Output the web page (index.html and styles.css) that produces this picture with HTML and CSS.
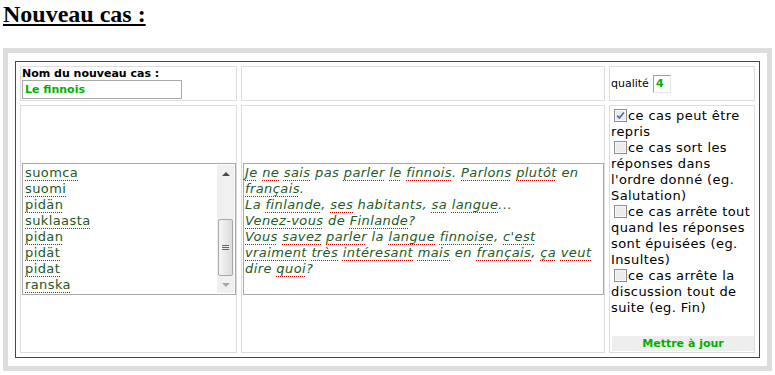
FILE: index.html
```html
<!DOCTYPE html>
<html lang="fr">

<head>
    <meta charset="UTF-8">
    <meta name="viewport" content="width=device-width, initial-scale=1.0">
    <title>Nouveau cas</title>
    <link rel="stylesheet" href="styles.css">
</head>

<body>
    <h1 class="page-title">Nouveau cas :</h1>

    <div class="panel">
        <form class="case-form">
            <div class="cell cell-name">
                <label class="name-label" for="caseName">Nom du nouveau cas :</label>
                <input type="text" id="caseName" class="name-input" value="Le finnois">
            </div>
            <div class="cell"></div>
            <div class="cell cell-quality">
                <label for="quality">qualité</label>
                <input type="text" id="quality" class="quality-input" value="4">
            </div>

            <div class="cell cell-middle">
                <div class="word-list">
                    <div class="word-lines">
                        <span class="sp">suomca</span><br>
                        <span class="sp">suomi</span><br>
                        <span class="sp">pidän</span><br>
                        <span class="sp">suklaasta</span><br>
                        <span class="sp">pidan</span><br>
                        <span class="sp">pidät</span><br>
                        <span class="sp">pidat</span><br>
                        <span class="sp">ranska</span>
                    </div>
                    <div class="scrollbar">
                        <span class="scroll-button"><span class="arrow-up"></span></span>
                        <span class="scroll-track">
                            <span class="scroll-thumb"><span class="grip"></span></span>
                        </span>
                        <span class="scroll-button"><span class="arrow-down"></span></span>
                    </div>
                </div>
            </div>
            <div class="cell cell-middle">
                <div class="answer-box">
                    <span class="sp">Je</span> <span class="sp">ne</span> <span class="sp">sais</span> pas <span class="sp">parler</span> <span class="sp">le</span> <span class="sp">finnois</span>. <span class="sp">Parlons</span> <span class="sp">plutôt</span> en <span class="sp">français</span>.<br>
                    La <span class="sp">finlande</span>, <span class="sp">ses</span> habitants, <span class="sp">sa</span> <span class="sp">langue</span>...<br>
                    <span class="sp">Venez-vous</span> de <span class="sp">Finlande</span>?<br>
                    <span class="sp">Vous</span> <span class="sp">savez</span> <span class="sp">parler</span> la <span class="sp">langue</span> <span class="sp">finnoise</span>, <span class="sp">c'est</span> <span class="sp">vraiment</span> <span class="sp">très</span> <span class="sp">intéresant</span> <span class="sp">mais</span> en <span class="sp">français</span>, <span class="sp">ça</span> <span class="sp">veut</span> dire <span class="sp">quoi</span>?
                </div>
            </div>
            <div class="cell cell-options">
                <label class="option">
                    <svg class="check" width="13" height="13" viewBox="0 0 13 13">
                        <rect x="0.5" y="0.5" width="12" height="12" fill="#ececec" stroke="#8f8f8f" />
                        <rect x="1.5" y="1.5" width="10" height="10" fill="none" stroke="#f8f8f8" />
                        <path d="M3.2 6.6 L5.4 9 L9.8 3.6" fill="none" stroke="#4f66a0" stroke-width="1.6" />
                    </svg>ce cas peut être repris
                </label>
                <label class="option">
                    <svg class="check" width="13" height="13" viewBox="0 0 13 13">
                        <rect x="0.5" y="0.5" width="12" height="12" fill="#ececec" stroke="#8f8f8f" />
                        <rect x="1.5" y="1.5" width="10" height="10" fill="none" stroke="#f8f8f8" />
                    </svg>ce cas sort les réponses dans l'ordre donné (eg. Salutation)
                </label>
                <label class="option">
                    <svg class="check" width="13" height="13" viewBox="0 0 13 13">
                        <rect x="0.5" y="0.5" width="12" height="12" fill="#ececec" stroke="#8f8f8f" />
                        <rect x="1.5" y="1.5" width="10" height="10" fill="none" stroke="#f8f8f8" />
                    </svg>ce cas arrête tout quand les réponses sont épuisées (eg. Insultes)
                </label>
                <label class="option">
                    <svg class="check" width="13" height="13" viewBox="0 0 13 13">
                        <rect x="0.5" y="0.5" width="12" height="12" fill="#ececec" stroke="#8f8f8f" />
                        <rect x="1.5" y="1.5" width="10" height="10" fill="none" stroke="#f8f8f8" />
                    </svg>ce cas arrête la discussion tout de suite (eg. Fin)
                </label>
                <button type="button" class="update-button">Mettre à jour</button>
            </div>
        </form>
    </div>
</body>

</html>
```

FILE: styles.css
```css
body {
    margin: 0;
    padding: 0 3px;
    background-color: white;
    font-family: "DejaVu Sans", Verdana, sans-serif;
    color: black;
}

.page-title {
    margin: 0 0 20px;
    font-family: "Liberation Serif", "Times New Roman", serif;
    font-size: 24px;
    line-height: 28px;
    font-weight: bold;
    text-decoration: underline;
    text-decoration-thickness: 2px;
    text-underline-offset: 2px;
}

.panel {
    border: 5px solid #dddddd;
    padding: 8px 7px;
}

.case-form {
    display: grid;
    grid-template-columns: 217px 364px 146px;
    gap: 4px;
    margin: 0;
    padding: 4px;
    border: 1px solid #ee0000;
}

.cell {
    border: 1px solid #dddddd;
    padding: 1px;
    font-size: 11px;
}

.cell-name {
    padding-right: 0;
}

.name-label {
    display: block;
    font-weight: bold;
    line-height: 12px;
}

.name-input {
    box-sizing: border-box;
    width: 160px;
    height: 19px;
    margin: 0;
    padding: 0 2px;
    border: 1px solid #a9a9a9;
    font-family: inherit;
    font-size: 11px;
    font-weight: bold;
    color: #00b000;
}

.cell-quality {
    display: flex;
    align-items: center;
    gap: 4px;
}

.quality-input {
    box-sizing: border-box;
    width: 18px;
    height: 18px;
    margin: 0;
    padding: 0 2px;
    border: 1px solid;
    border-color: #a0a0a0 #e8e8e8 #e8e8e8 #a0a0a0;
    font-family: inherit;
    font-size: 11px;
    font-weight: bold;
    color: #00b000;
}

.cell-middle {
    display: flex;
    align-items: center;
    padding: 0 0 0 1px;
}

.word-list,
.answer-box {
    box-sizing: border-box;
    height: 132px;
    border: 1px solid #a9a9a9;
    font-size: 13px;
    line-height: 16px;
    letter-spacing: 0.4px;
    color: #235a23;
}

.word-list {
    display: flex;
    width: 214px;
    padding: 1px;
}

.word-lines {
    flex: 1;
    padding-left: 1px;
}

.answer-box {
    width: 361px;
    padding: 1px 4px 1px 1px;
    font-style: italic;
}

.sp {
    text-decoration: underline dotted #e00000;
    text-decoration-thickness: 1px;
    text-underline-offset: 3px;
}

.scrollbar {
    display: flex;
    flex-direction: column;
    width: 17px;
    background-color: #f0f0f0;
}

.scroll-button {
    display: flex;
    align-items: center;
    justify-content: center;
    height: 17px;
}

.arrow-up {
    border-left: 4px solid transparent;
    border-right: 4px solid transparent;
    border-bottom: 4px solid #4a4a4a;
}

.arrow-down {
    border-left: 4px solid transparent;
    border-right: 4px solid transparent;
    border-top: 4px solid #a6a6a6;
}

.scroll-track {
    flex: 1;
    display: flex;
    flex-direction: column;
    justify-content: flex-end;
}

.scroll-thumb {
    display: flex;
    align-items: center;
    justify-content: center;
    box-sizing: border-box;
    height: 57px;
    margin: 0 1px;
    border: 1px solid #a8a8a8;
    border-radius: 2px;
    background: linear-gradient(to right, #f6f6f6, #dcdcdc);
}

.grip {
    width: 7px;
    height: 5px;
    background: repeating-linear-gradient(#666 0 1px, transparent 1px 2px);
}

.cell-options {
    display: flex;
    flex-direction: column;
    padding: 2px 0 1px 1px;
    font-size: 13px;
    line-height: 16px;
    letter-spacing: 0.4px;
}

.option {
    display: block;
}

.check {
    vertical-align: -2px;
    margin: 0 1px 0 3px;
}

.update-button {
    height: 15px;
    margin: 20px 0 0 1px;
    padding: 0;
    border: none;
    background-color: #eeeeee;
    font-family: inherit;
    font-size: 11px;
    font-weight: bold;
    line-height: 15px;
    letter-spacing: 0;
    color: #00b000;
}
```
